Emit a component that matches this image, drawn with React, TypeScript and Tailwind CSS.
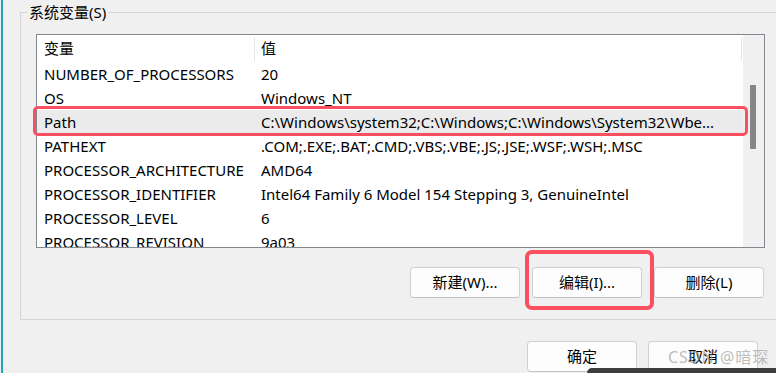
const ROWS = [
  { name: "NUMBER_OF_PROCESSORS", value: "20" },
  { name: "OS", value: "Windows_NT" },
  { name: "Path", value: "C:\\Windows\\system32;C:\\Windows;C:\\Windows\\System32\\Wbe...", selected: true },
  { name: "PATHEXT", value: ".COM;.EXE;.BAT;.CMD;.VBS;.VBE;.JS;.JSE;.WSF;.WSH;.MSC" },
  { name: "PROCESSOR_ARCHITECTURE", value: "AMD64" },
  { name: "PROCESSOR_IDENTIFIER", value: "Intel64 Family 6 Model 154 Stepping 3, GenuineIntel" },
  { name: "PROCESSOR_LEVEL", value: "6" },
  { name: "PROCESSOR_REVISION", value: "9a03" },
];

function Button({ label, children }: { label: string; children?: React.ReactNode }) {
  return (
    <button className="relative h-[31px] w-[110px] shrink-0 rounded-[4px] border border-[#d0d0d0] border-b-[#c2c2c2] bg-[#fdfdfd] text-[15px] leading-none text-black">
      {label}
      {children}
    </button>
  );
}

export default function App() {
  return (
    <div className="relative flex h-[373px] w-[776px] overflow-hidden bg-[#f0f0f0] font-['Noto_Sans','Noto_Sans_CJK_SC',sans-serif] text-[15px] text-black">
      <div className="ml-[1px] w-[2px] shrink-0 bg-[#1fa5b4]" />

      <div className="flex min-w-0 flex-1 flex-col">
        <fieldset className="ml-[17px] w-[790px] shrink-0 border border-[#d5d5d5] pb-[21px]">
          <legend className="ml-[6px] px-[2px] leading-[24px]">系统变量(S)</legend>

          <div className="ml-[15px] mt-[10px] w-[729px]">
            {/* list view */}
            <div className="relative h-[214px] border border-[#828790] bg-white">
              <div className="flex h-full">
                <div className="min-w-0 flex-1 overflow-hidden">
                  <div className="flex h-[27px] items-center">
                    <div className="w-[217px] pl-[7px]">变量</div>
                    <span className="h-[24px] w-px self-start mt-[2px] bg-[#e5e5e5]" />
                    <div className="w-[486px] pl-[6px]">值</div>
                    <span className="h-[24px] w-px self-start mt-[2px] bg-[#e5e5e5]" />
                  </div>
                  {ROWS.map((r) => (
                    <div
                      key={r.name}
                      className={`flex h-[24px] items-center whitespace-nowrap ${r.selected ? "bg-[#ebebeb]" : ""}`}
                    >
                      <div className="w-[218px] shrink-0 overflow-hidden pl-[7px]">{r.name}</div>
                      <div className="min-w-0 flex-1 overflow-hidden pl-[6px]">{r.value}</div>
                    </div>
                  ))}
                </div>
                <div className="w-[21px] shrink-0 bg-[#f0f0f0] pl-[7px] pt-[50px]">
                  <div className="h-[64px] w-[6px] rounded-[1px] bg-[#868686]" />
                </div>
              </div>
              {/* annotation around Path row */}
              <span className="pointer-events-none absolute left-[-4px] top-[71px] h-[30px] w-[715px] rounded-[5px] border-[3px] border-[#fb4f61]" />
            </div>

            <div className="mt-[19px] flex justify-end gap-[12px] pr-[1px]">
              <Button label="新建(W)..." />
              <Button label="编辑(I)...">
                <span className="pointer-events-none absolute -bottom-[13px] -left-[8px] -right-[13px] -top-[18px] rounded-[7px] border-[4px] border-[#fb4f61]" />
              </Button>
              <Button label="删除(L)" />
            </div>
          </div>
        </fieldset>

        <div className="mt-[21px] flex justify-end gap-[11px] pr-[18px]">
          <Button label="确定" />
          <Button label="取消" />
        </div>
      </div>

      <span className="pointer-events-none absolute left-[668px] top-[345px] text-[16px] tracking-[1px] text-[#a0a0a0]/70">
        CSDN @暗琛
      </span>
      <div className="absolute bottom-0 left-[587px] right-0 top-[368px] rounded-tl-[6px] bg-[#3d3d3d]" />
    </div>
  );
}
